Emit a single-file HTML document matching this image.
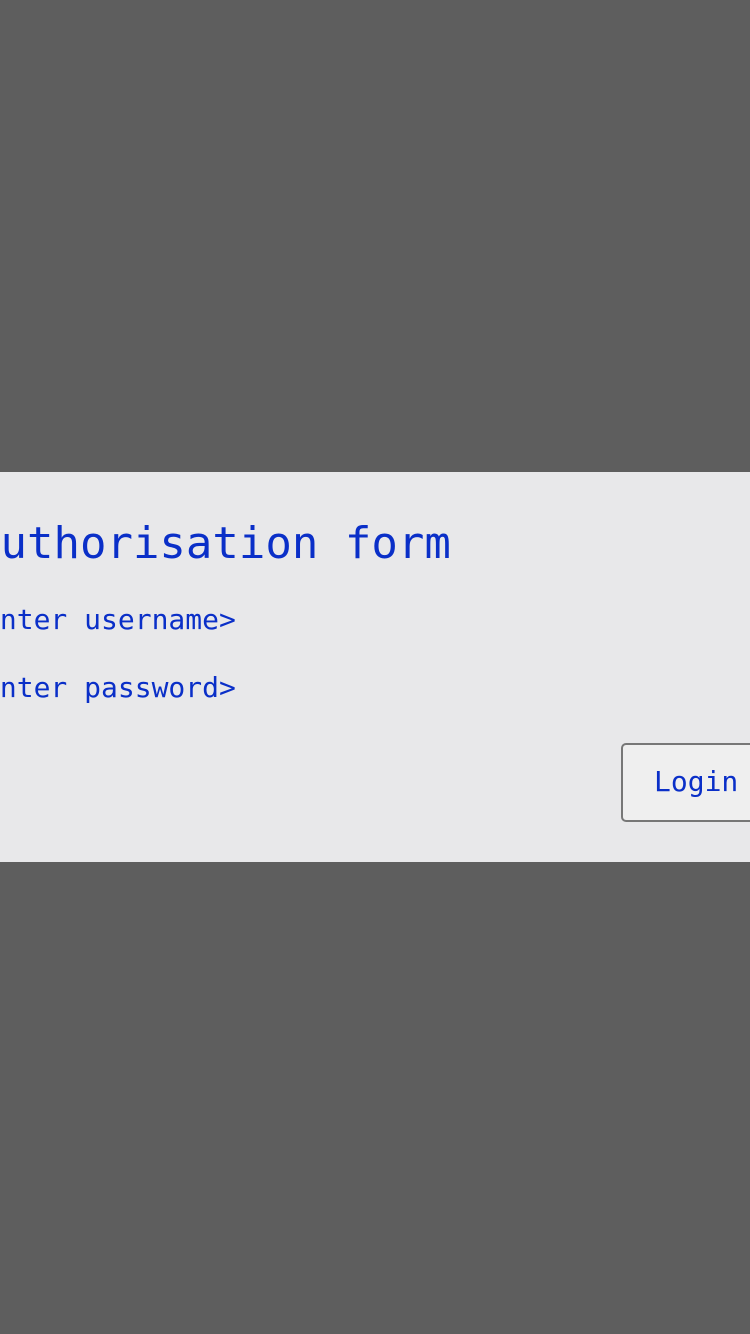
<!DOCTYPE html>
<html><head><style>
body{margin:0;width:750px;height:1334px;background:#5e5e5e;position:relative;overflow:hidden;font-family:"DejaVu Sans Mono","Liberation Mono",monospace;color:#0a2fc8}
.panel{position:absolute;left:0;top:472px;width:750px;height:390px;background:#e8e8ea}
.t{position:absolute;white-space:nowrap}
.btn{position:absolute;left:621px;top:743px;width:160px;height:79px;border:2px solid #777;border-radius:5px;background:#efefef;box-sizing:border-box}
</style></head><body>
<div class="panel"></div>
<div class="t" style="left:-26px;top:514px;font-size:44px;line-height:60px">authorisation form</div>
<div class="t" style="left:-17px;top:602px;font-size:28px;line-height:36px">enter username&gt;</div>
<div class="t" style="left:-17px;top:670px;font-size:28px;line-height:36px">enter password&gt;</div>
<div class="btn"></div>
<div class="t" style="left:654px;top:764px;font-size:28px;line-height:36px">Login</div>
</body></html>
